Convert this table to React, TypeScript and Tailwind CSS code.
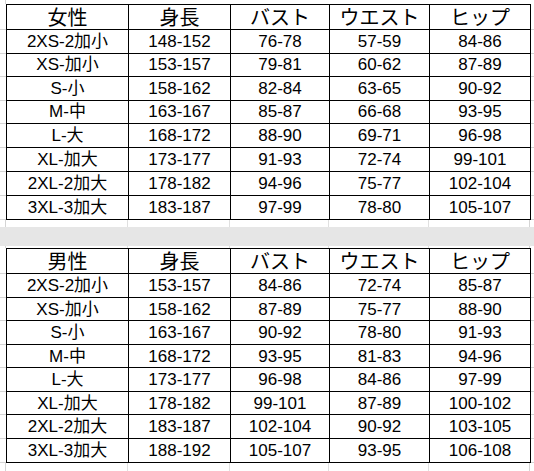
import React from "react";

const headerF = ["女性", "身長", "バスト", "ウエスト", "ヒップ"];
const headerM = ["男性", "身長", "バスト", "ウエスト", "ヒップ"];

const women = [
  ["2XS-2加小", "148-152", "76-78", "57-59", "84-86"],
  ["XS-加小", "153-157", "79-81", "60-62", "87-89"],
  ["S-小", "158-162", "82-84", "63-65", "90-92"],
  ["M-中", "163-167", "85-87", "66-68", "93-95"],
  ["L-大", "168-172", "88-90", "69-71", "96-98"],
  ["XL-加大", "173-177", "91-93", "72-74", "99-101"],
  ["2XL-2加大", "178-182", "94-96", "75-77", "102-104"],
  ["3XL-3加大", "183-187", "97-99", "78-80", "105-107"],
];

const men = [
  ["2XS-2加小", "153-157", "84-86", "72-74", "85-87"],
  ["XS-加小", "158-162", "87-89", "75-77", "88-90"],
  ["S-小", "163-167", "90-92", "78-80", "91-93"],
  ["M-中", "168-172", "93-95", "81-83", "94-96"],
  ["L-大", "173-177", "96-98", "84-86", "97-99"],
  ["XL-加大", "178-182", "99-101", "87-89", "100-102"],
  ["2XL-2加大", "183-187", "102-104", "90-92", "103-105"],
  ["3XL-3加大", "188-192", "105-107", "93-95", "106-108"],
];

const colW = ["w-[123px] border-l", "w-[102px]", "w-[99px]", "w-[100px]", "w-[101px]"];

function Row({
  cells,
  header,
  top,
  h,
}: {
  cells: string[];
  header?: boolean;
  top?: boolean;
  h: string;
}) {
  return (
    <div className={`flex ${h}`}>
      <div className="w-[6px] border-b border-[#d4d4d4]" />
      <div className={`flex border-b border-black ${top ? "border-t" : ""}`}>
        {cells.map((c, i) => (
          <div
            key={i}
            className={`${colW[i]} border-r border-black flex items-center justify-center text-black whitespace-nowrap ${
              header
                ? "text-[20px] font-['Noto_Sans_CJK_JP',sans-serif] leading-none"
                : "text-[17px] font-['Liberation_Sans','Noto_Sans_CJK_SC',sans-serif] leading-none"
            }`}
          >
            {c}
          </div>
        ))}
      </div>
      <div className="flex-1 border-b border-[#d4d4d4]" />
    </div>
  );
}

function Table({ head, rows, heights }: { head: string[]; rows: string[][]; heights: string[] }) {
  return (
    <div className="flex flex-col">
      <Row cells={head} header top h="h-[26px]" />
      {rows.map((r, i) => (
        <Row key={i} cells={r} h={heights[i]} />
      ))}
    </div>
  );
}

function GapLines({ h }: { h: string }) {
  return (
    <div className={`flex ${h}`}>
      <div className="w-[6px] border-r border-[#d4d4d4]" />
      <div className="w-[122px] border-r border-[#e0e0e0]" />
      <div className="w-[102px] border-r border-[#e0e0e0]" />
      <div className="w-[99px] border-r border-[#e0e0e0]" />
      <div className="w-[100px] border-r border-[#e0e0e0]" />
      <div className="w-[101px] border-r border-[#d4d4d4]" />
      <div className="flex-1" />
    </div>
  );
}

export default function App() {
  return (
    <div className="w-[534px] h-[471px] bg-white overflow-hidden flex flex-col">
      <div className="h-[4px] flex">
        <div className="w-[6px] border-r border-[#d4d4d4]" />
      </div>
      <Table
        head={headerF}
        rows={women}
        heights={["h-[24px]", "h-[23px]", "h-[24px]", "h-[23px]", "h-[24px]", "h-[24px]", "h-[24px]", "h-[24px]"]}
      />
      <GapLines h="h-[7px]" />
      <div className="h-[20px] bg-[#e6e6e6]" />
      <GapLines h="h-[2px]" />
      <Table
        head={headerM}
        rows={men}
        heights={["h-[24px]", "h-[23px]", "h-[24px]", "h-[23px]", "h-[24px]", "h-[23px]", "h-[24px]", "h-[24px]"]}
      />
      <GapLines h="h-[8px]" />
    </div>
  );
}
